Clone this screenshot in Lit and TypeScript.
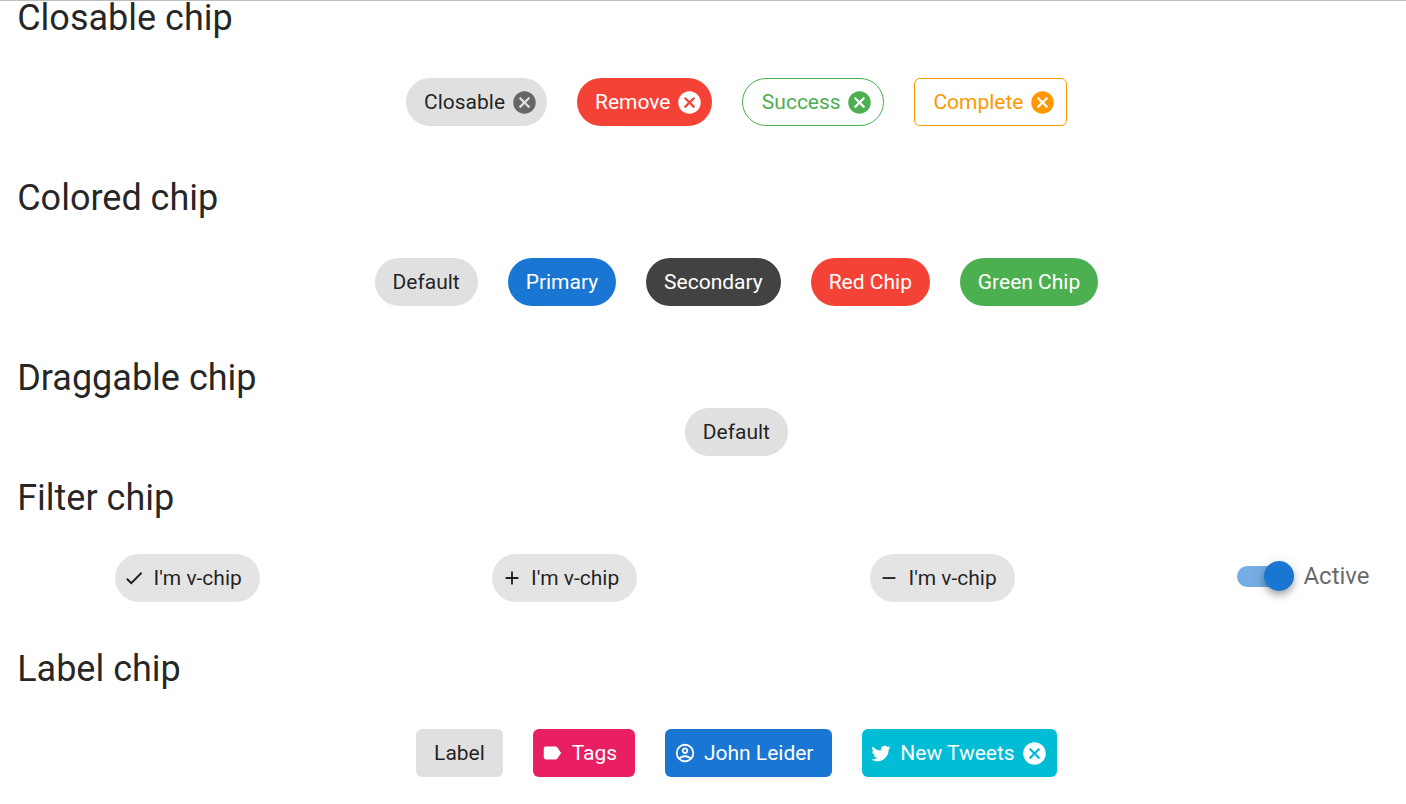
import { LitElement, html, css, svg, nothing } from "lit";
import { customElement, property } from "lit/decorators.js";
import { classMap } from "lit/directives/class-map.js";

const ICONS: Record<string, string> = {
  close:
    "M12,2C17.53,2 22,6.47 22,12C22,17.53 17.53,22 12,22C6.47,22 2,17.53 2,12C2,6.47 6.47,2 12,2M15.59,7L12,10.59L8.41,7L7,8.41L10.59,12L7,15.59L8.41,17L12,13.41L15.59,17L17,15.59L13.41,12L17,8.41L15.59,7Z",
  check: "M21,7L9,19L3.5,13.5L4.91,12.09L9,16.17L19.59,5.59L21,7Z",
  plus: "M19,13H13V19H11V13H5V11H11V5H13V11H19V13Z",
  minus: "M19,13H5V11H19V13Z",
  label:
    "M17.63,5.84C17.27,5.33 16.67,5 16,5H5A2,2 0 0,0 3,7V17A2,2 0 0,0 5,19H16C16.67,19 17.27,18.66 17.63,18.15L22,12L17.63,5.84Z",
  account:
    "M12,2A10,10 0 0,0 2,12A10,10 0 0,0 12,22A10,10 0 0,0 22,12A10,10 0 0,0 12,2M7.07,18.28C7.5,17.38 10.12,16.5 12,16.5C13.88,16.5 16.5,17.38 16.93,18.28C15.57,19.36 13.86,20 12,20C10.14,20 8.43,19.36 7.07,18.28M18.36,16.83C16.93,15.09 13.46,14.5 12,14.5C10.54,14.5 7.07,15.09 5.64,16.83C4.62,15.5 4,13.82 4,12C4,7.59 7.59,4 12,4C16.41,4 20,7.59 20,12C20,13.82 19.38,15.5 18.36,16.83M12,6C10.06,6 8.5,7.56 8.5,9.5C8.5,11.44 10.06,13 12,13C13.94,13 15.5,11.44 15.5,9.5C15.5,7.56 13.94,6 12,6M12,11A1.5,1.5 0 0,1 10.5,9.5A1.5,1.5 0 0,1 12,8A1.5,1.5 0 0,1 13.5,9.5A1.5,1.5 0 0,1 12,11Z",
  twitter:
    "M22.46,6C21.69,6.35 20.86,6.58 20,6.69C20.88,6.16 21.56,5.32 21.88,4.31C21.05,4.81 20.13,5.16 19.16,5.36C18.37,4.5 17.26,4 16,4C13.65,4 11.73,5.92 11.73,8.29C11.73,8.63 11.77,8.96 11.84,9.27C8.28,9.09 5.11,7.38 3,4.79C2.63,5.42 2.42,6.16 2.42,6.94C2.42,8.43 3.17,9.75 4.33,10.5C3.62,10.5 2.96,10.3 2.38,10C2.38,10 2.38,10 2.38,10.03C2.38,12.11 3.86,13.85 5.82,14.24C5.46,14.34 5.08,14.39 4.69,14.39C4.42,14.39 4.15,14.36 3.89,14.31C4.43,16 6,17.26 7.89,17.29C6.43,18.45 4.58,19.13 2.56,19.13C2.22,19.13 1.88,19.11 1.54,19.07C3.44,20.29 5.7,21 8.12,21C16,21 20.33,14.46 20.33,8.79C20.33,8.6 20.33,8.42 20.32,8.23C21.16,7.63 21.88,6.87 22.46,6Z",
};

const icon = (name: string, cls: string) =>
  html`<svg class=${cls} viewBox="0 0 24 24">${svg`<path d=${ICONS[name]}></path>`}</svg>`;

@customElement("demo-chip")
export class DemoChip extends LitElement {
  @property() color = "default";
  @property() icon = "";
  @property({ type: Boolean }) close = false;
  @property({ type: Boolean }) label = false;
  @property({ type: Boolean }) outlined = false;
  @property({ type: Boolean }) active = false;

  static styles = css`
    :host {
      display: block;
      flex: none;
    }
    .chip {
      box-sizing: border-box;
      display: flex;
      align-items: center;
      height: 48px;
      padding: 0 18px;
      border-radius: 24px;
      font-size: 21px;
      line-height: 30px;
      white-space: nowrap;
      color: #fff;
    }
    .label { border-radius: 6px; }
    .closable { padding-right: 9px; }
    .outlined {
      border: 1px solid currentColor;
      padding-left: 18.5px;
      padding-right: 9.5px;
    }
    .with-icon { padding-left: 8.5px; }
    .lead {
      width: 22px;
      height: 22px;
      margin: 0 8.3px 1px 0;
      fill: currentColor;
    }
    .shut {
      width: 27px;
      height: 27px;
      margin: 1px 0 0 6px;
      fill: currentColor;
    }
    .outlined .shut { margin-left: 5.8px; }
    .default { background: #e0e0e0; color: rgba(0, 0, 0, 0.87); }
    .default .shut { fill: #666; }
    .active { background: #e4e4e4; }
    .red { background: #f44336; }
    .primary { background: #1976d2; }
    .secondary { background: #424242; }
    .green { background: #4caf50; }
    .pink { background: #e91e63; }
    .cyan { background: #00bcd4; }
    .outlined.green { background: none; color: #4caf50; }
    .outlined.orange { background: none; color: #ff9800; }
  `;

  render() {
    const classes = {
      chip: true,
      [this.color]: true,
      label: this.label,
      outlined: this.outlined,
      active: this.active,
      closable: this.close,
      "with-icon": !!this.icon,
    };
    return html`<div class=${classMap(classes)}>
      ${this.icon ? icon(this.icon, "lead") : nothing}<span><slot></slot></span>${this.close
        ? icon("close", "shut")
        : nothing}
    </div>`;
  }
}

@customElement("app-root")
export class AppRoot extends LitElement {
  static styles = css`
    :host {
      display: block;
      box-sizing: border-box;
      height: 804px;
      border-top: 1px solid #bdbdbd;
      background: #fff;
      color: rgba(0, 0, 0, 0.87);
      font-family: Roboto, sans-serif;
    }
    h2 {
      margin: 0;
      padding: 6px 0 6px 17.2px;
      font-size: 36px;
      font-weight: 400;
      line-height: 36px;
    }
    h2:first-child {
      padding-top: 0;
      line-height: 34px;
      padding-bottom: 7px;
    }
    .row {
      display: flex;
      justify-content: center;
      gap: 29.9px;
      padding: 36px 0 48px 66.8px;
    }
    .tight { padding-top: 6px; padding-bottom: 18px; }
    .row:last-child { gap: 30px; padding-bottom: 0; }
    .filters {
      justify-content: flex-start;
      gap: 232.4px;
      padding: 32px 0 43px 114.8px;
    }
    .switch {
      display: flex;
      align-items: center;
      height: 44px;
      margin-left: -9.7px;
      font-size: 24px;
      color: rgba(0, 0, 0, 0.6);
    }
    .track {
      display: flex;
      align-items: center;
      justify-content: flex-end;
      width: 54px;
      height: 21px;
      margin-right: 12px;
      border-radius: 11px;
      background: #75ade4;
    }
    .thumb {
      flex: none;
      width: 30px;
      height: 30px;
      margin-right: -3px;
      border-radius: 50%;
      background: #1976d2;
      box-shadow: 0 3px 6px -1px rgba(0, 0, 0, 0.2),
        0 6px 7.5px rgba(0, 0, 0, 0.14), 0 1.5px 15px rgba(0, 0, 0, 0.12);
    }
  `;

  render() {
    return html`<div class="page">
      <h2>Closable chip</h2>
      <div class="row">
        <demo-chip close>Closable</demo-chip>
        <demo-chip color="red" close>Remove</demo-chip>
        <demo-chip color="green" outlined close>Success</demo-chip>
        <demo-chip color="orange" outlined label close>Complete</demo-chip>
      </div>
      <h2>Colored chip</h2>
      <div class="row">
        <demo-chip>Default</demo-chip>
        <demo-chip color="primary">Primary</demo-chip>
        <demo-chip color="secondary">Secondary</demo-chip>
        <demo-chip color="red">Red Chip</demo-chip>
        <demo-chip color="green">Green Chip</demo-chip>
      </div>
      <h2>Draggable chip</h2>
      <div class="row tight"><demo-chip>Default</demo-chip></div>
      <h2>Filter chip</h2>
      <div class="row filters">
        <demo-chip icon="check" active>I'm v-chip</demo-chip>
        <demo-chip icon="plus" active>I'm v-chip</demo-chip>
        <demo-chip icon="minus" active>I'm v-chip</demo-chip>
        <div class="switch">
          <div class="track"><div class="thumb"></div></div>
          <span>Active</span>
        </div>
      </div>
      <h2>Label chip</h2>
      <div class="row">
        <demo-chip label>Label</demo-chip>
        <demo-chip color="pink" label icon="label">Tags</demo-chip>
        <demo-chip color="primary" label icon="account">John Leider</demo-chip>
        <demo-chip color="cyan" label icon="twitter" close>New Tweets</demo-chip>
      </div>
    </div>`;
  }
}
